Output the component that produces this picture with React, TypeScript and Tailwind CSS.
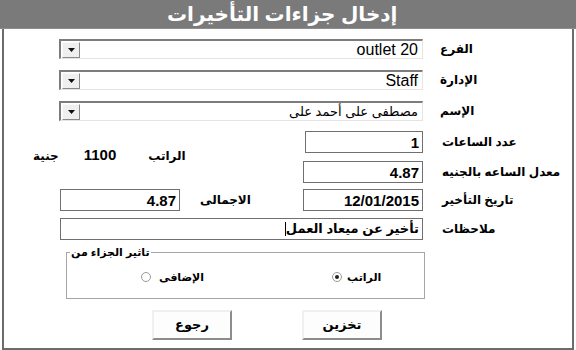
import React from 'react';

const FONT = "font-['Liberation_Sans','DejaVu_Sans',sans-serif]";

const Combo: React.FC<{ value: string; serif?: boolean }> = ({ value, serif }) => (
  <div className="ml-[55px] w-[364px] h-[20px] flex items-center border-t-2 border-l-2 border-t-[#7c7c7c] border-l-[#7c7c7c] border-b border-r border-b-[#e4e4e4] border-r-[#e4e4e4] bg-white">
    <div className="ml-[1px] w-[18px] h-[16px] flex items-center justify-center bg-[#efefef] border border-t-[#fafafa] border-l-[#fafafa] border-b-[#8a8a8a] border-r-[#8a8a8a]">
      <svg width="7" height="4" viewBox="0 0 7 4">
        <path d="M0 0 H7 L3.5 4 Z" fill="#111" />
      </svg>
    </div>
    <span
      dir={serif ? 'rtl' : 'ltr'}
      className={`flex-1 pr-[4px] text-right text-black leading-none ${serif ? 'text-[13px]' : 'text-[16px]'}`}
    >
      {value}
    </span>
  </div>
);

const Label: React.FC<{ text: string; ml?: string }> = ({ text, ml = 'ml-[17px]' }) => (
  <span dir="rtl" className={`${ml} text-[12px] font-bold text-black whitespace-nowrap`}>
    {text}
  </span>
);

const Box: React.FC<{ value: string; w: string; ml?: string }> = ({ value, w, ml = '' }) => (
  <div className={`${ml} ${w} h-[22px] border border-[#707070] bg-white flex items-center justify-end pr-[3px]`}>
    <span className="text-[15px] font-bold text-black leading-none">{value}</span>
  </div>
);

const Radio: React.FC<{ checked?: boolean }> = ({ checked }) => (
  <span className="w-[10px] h-[10px] rounded-full border border-[#9a9a9a] bg-white flex items-center justify-center">
    {checked && <span className="w-[4px] h-[4px] rounded-full bg-[#222]" />}
  </span>
);

const Button: React.FC<{ text: string; ml: string }> = ({ text, ml }) => (
  <button
    className={`${ml} w-[80px] h-[30px] bg-[#fdfdfd] border-2 border-t-[#f0f0f0] border-l-[#f0f0f0] border-b-[#8c8c8c] border-r-[#8c8c8c] flex items-center justify-center`}
  >
    <span dir="rtl" className="text-[13px] font-bold text-black">{text}</span>
  </button>
);

export default function App() {
  return (
    <div className={`w-[576px] h-[350px] bg-white flex flex-col ${FONT}`}>
      <div className="h-[29px] bg-[#7a7a7a] flex items-center border-b border-[#8e8e8e]">
        <span dir="rtl" className="ml-[167px] text-white text-[20px] font-bold leading-none">
          إدخال جزاءات التأخيرات
        </span>
      </div>

      <div className="flex-1 mx-[2px] border-x-2 border-b-2 border-[#6c6c6c] flex flex-col">
        <div className="mt-[10px] flex items-center">
          <Combo value="outlet 20" />
          <Label text="الفرع" />
        </div>
        <div className="mt-[11px] flex items-center">
          <Combo value="Staff" />
          <Label text="الإدارة" />
        </div>
        <div className="mt-[11px] flex items-center">
          <Combo value="مصطفى على أحمد على" serif />
          <Label text="الإسم" />
        </div>

        <div className="mt-[10px] flex">
          <div className="w-[299px] flex items-center pb-[3px]">
            <span dir="rtl" className="ml-[29px] text-[12px] font-bold">جنية</span>
            <span className="ml-[25px] text-[15px] font-bold">1100</span>
            <span dir="rtl" className="ml-[32px] text-[12px] font-bold">الراتب</span>
          </div>
          <div className="flex flex-col">
            <div className="flex items-center">
              <Box value="1" w="w-[118px]" ml="ml-[2px]" />
              <Label text="عدد الساعات" ml="ml-[19px]" />
            </div>
            <div className="mt-[8px] flex items-center">
              <Box value="4.87" w="w-[120px]" />
              <Label text="معدل الساعه بالجنيه" ml="ml-[19px]" />
            </div>
          </div>
        </div>

        <div className="mt-[6px] flex items-center">
          <div className="w-[299px] flex items-center">
            <Box value="4.87" w="w-[120px]" ml="ml-[56px]" />
            <Label text="الاجمالى" ml="ml-[20px]" />
          </div>
          <Box value="12/01/2015" w="w-[120px]" />
          <Label text="تاريخ التأخير" ml="ml-[19px]" />
        </div>

        <div className="mt-[7px] flex items-center">
          <div className="ml-[56px] w-[363px] h-[22px] border border-[#707070] flex items-center justify-end pr-[3px]">
            <span dir="rtl" className="text-[13px] font-bold leading-none">
              تأخير عن ميعاد العمل<span className="inline-block w-[1px] h-[14px] bg-black align-middle" />
            </span>
          </div>
          <Label text="ملاحظات" ml="ml-[19px]" />
        </div>

        <fieldset className="mt-[7px] ml-[62px] w-[359px] h-[52px] border border-[#a6a6a6]">
          <legend dir="rtl" className="ml-[3px] px-[1px] text-[11px] font-bold leading-none">
            تاثير الجزاء من
          </legend>
          <div className="mt-[11px] flex items-center">
            <div className="ml-[74px] flex items-center">
              <Radio />
              <span dir="rtl" className="ml-[8px] text-[11px] font-bold">الإضافى</span>
            </div>
            <div className="ml-[128px] flex items-center">
              <Radio checked />
              <span dir="rtl" className="ml-[5px] text-[11px] font-bold">الراتب</span>
            </div>
          </div>
        </fieldset>

        <div className="mt-[11px] flex">
          <Button text="رجوع" ml="ml-[148px]" />
          <Button text="تخزين" ml="ml-[70px]" />
        </div>
      </div>
    </div>
  );
}
